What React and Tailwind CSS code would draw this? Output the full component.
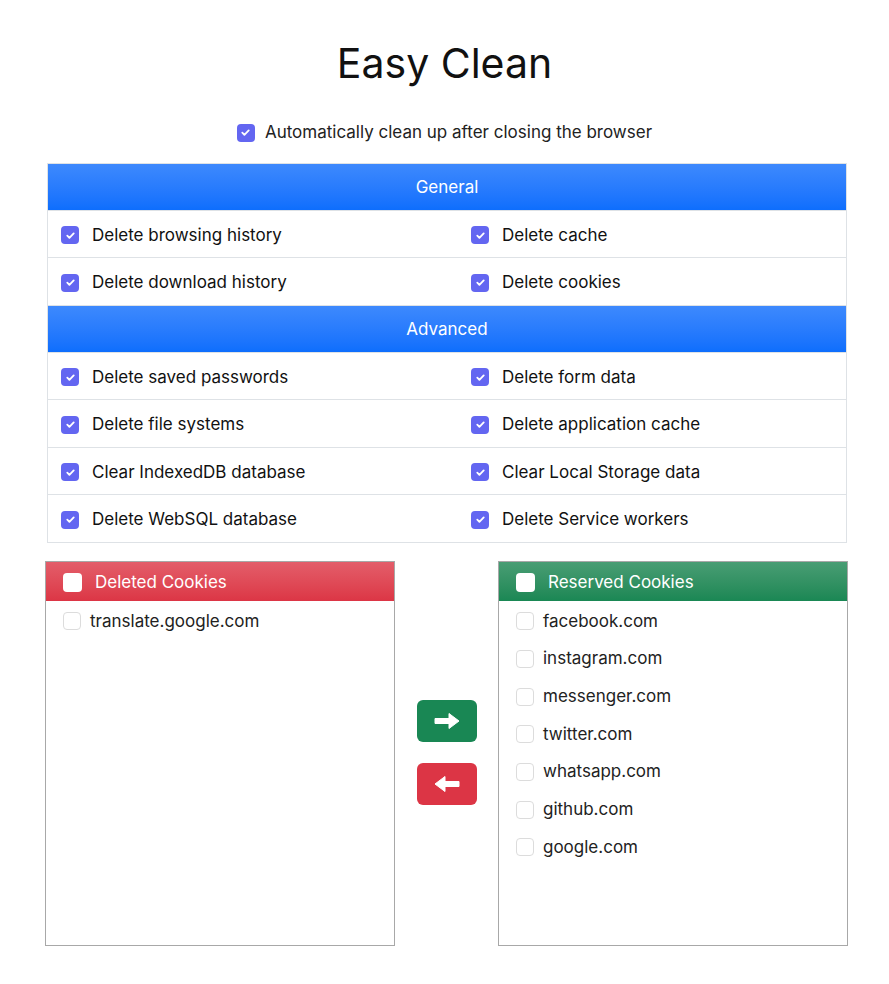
import { useState } from 'react';

const general = [
  ['Delete browsing history', 'Delete cache'],
  ['Delete download history', 'Delete cookies'],
];

const advanced = [
  ['Delete saved passwords', 'Delete form data'],
  ['Delete file systems', 'Delete application cache'],
  ['Clear IndexedDB database', 'Clear Local Storage data'],
  ['Delete WebSQL database', 'Delete Service workers'],
];

const deleted = ['translate.google.com'];
const reserved = ['facebook.com', 'instagram.com', 'messenger.com', 'twitter.com', 'whatsapp.com', 'github.com', 'google.com'];

function Check({ on }) {
  if (on) {
    return (
      <span className="flex items-center justify-center w-[18px] h-[18px] rounded-[4px] bg-[#6366f1] shrink-0">
        <svg viewBox="0 0 12 12" className="w-[11px] h-[11px]"><path d="M2.5 6.2l2.3 2.3 4.7-4.8" fill="none" stroke="white" strokeWidth="2" strokeLinecap="round" strokeLinejoin="round"/></svg>
      </span>
    );
  }
  return <span className="w-[18px] h-[18px] rounded-[4px] border border-[#dcdcdc] bg-white shrink-0"/>;
}

const Row = ({ pair }) => (
  <div className="grid grid-cols-[410px_1fr] border-t border-[#dee2e6] h-[47.5px] pt-[3px]">
    {pair.map(t => (
      <label key={t} className="flex items-center gap-[13px] pl-[13px]">
        <Check on/><span>{t}</span>
      </label>
    ))}
  </div>
);

const Head = ({ title }) => (
  <div className="h-[46px] pt-[2px] flex items-center justify-center text-white bg-gradient-to-b from-[#3d89fd] to-[#0d6efd]">{title}</div>
);

function CookieBox({ title, items, head }) {
  return (
    <div className="w-[350px] h-[385px] border border-[#a8a8a8] bg-white">
      <div className={`h-[39px] pt-[3px] flex items-center gap-[13px] pl-[17px] text-white ${head}`}>
        <span className="w-[19px] h-[19px] rounded-[4px] bg-white"/>
        <span>{title}</span>
      </div>
      <div className="pt-[2px] pl-[17px] flex flex-col">
        {items.map(i => (
          <div key={i} className="h-[37.7px] flex items-center gap-[9px] text-[#222]">
            <Check/><span>{i}</span>
          </div>
        ))}
      </div>
    </div>
  );
}

export default function App() {
  const [auto] = useState(true);
  return (
    <div className="min-h-screen bg-white text-[17px] text-[#111] font-['Inter','Liberation_Sans',sans-serif]">
      <h1 className="pt-[37px] text-center text-[41px] leading-[52px] font-normal">Easy Clean</h1>
      <div className="mt-[31px] flex items-center justify-center gap-[10px] text-[#222]">
        <Check on={auto}/><span>Automatically clean up after closing the browser</span>
      </div>
      <div className="mx-[47px] mt-[17px] w-[800px] border border-[#dee2e6]">
        <Head title="General"/>
        {general.map((p, i) => <Row key={i} pair={p}/>)}
        <div className="border-t border-[#dee2e6]"><Head title="Advanced"/></div>
        {advanced.map((p, i) => <Row key={i} pair={p}/>)}
      </div>
      <div className="mt-[18px] ml-[45px] flex items-center gap-[22px]">
        <CookieBox title="Deleted Cookies" items={deleted} head="bg-gradient-to-b from-[#e35d6a] to-[#dc3545]"/>
        <div className="flex flex-col gap-[21px] -mt-[2px]">
          <button className="w-[60px] h-[42px] rounded-[6px] bg-[#198754] flex items-center justify-center">
            <svg viewBox="0 0 26 18" className="w-[26px] h-[18px]"><path d="M1 6.5h14V1.5L25 9l-10 7.5v-5H1z" fill="white" strokeLinejoin="round" stroke="white" strokeWidth="1"/></svg>
          </button>
          <button className="w-[60px] h-[42px] rounded-[6px] bg-[#dc3545] flex items-center justify-center">
            <svg viewBox="0 0 26 18" className="w-[26px] h-[18px]"><path d="M25 6.5H11V1.5L1 9l10 7.5v-5h14z" fill="white" strokeLinejoin="round" stroke="white" strokeWidth="1"/></svg>
          </button>
        </div>
        <div className="-ml-[1px]">
          <CookieBox title="Reserved Cookies" items={reserved} head="bg-gradient-to-b from-[#489d74] to-[#198754]"/>
        </div>
      </div>
    </div>
  );
}
